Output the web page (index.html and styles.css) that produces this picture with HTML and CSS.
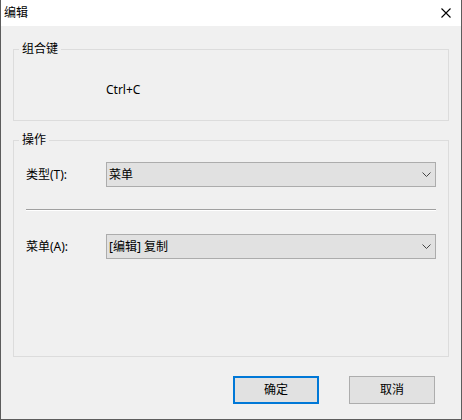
FILE: index.html
```html
<!DOCTYPE html>
<html lang="zh-CN">
<head>
<meta charset="utf-8">
<title>编辑</title>
<link rel="stylesheet" href="styles.css">
</head>
<body>
<div class="window">
  <div class="titlebar">
    <span class="title">编辑</span>
    <svg class="close" width="10" height="10" viewBox="0 0 10 10"><path d="M0.5 0.5L9.5 9.5M9.5 0.5L0.5 9.5" stroke="#000" stroke-width="1.1" fill="none"/></svg>
  </div>
  <div class="content">
    <div class="group group-keys">
      <div class="legend">组合键</div>
      <div class="keys">Ctrl+C</div>
    </div>
    <div class="group group-action">
      <div class="legend">操作</div>
      <div class="row row-type">
        <span class="label">类型(T):</span>
        <div class="select"><span>菜单</span><svg width="9" height="5" viewBox="0 0 9 5"><path d="M0.5 0.5L4.5 4.5L8.5 0.5" stroke="#444" stroke-width="1" fill="none"/></svg></div>
      </div>
      <div class="separator"></div>
      <div class="row row-menu">
        <span class="label">菜单(A):</span>
        <div class="select"><span>[编辑] 复制</span><svg width="9" height="5" viewBox="0 0 9 5"><path d="M0.5 0.5L4.5 4.5L8.5 0.5" stroke="#444" stroke-width="1" fill="none"/></svg></div>
      </div>
    </div>
    <div class="buttons">
      <div class="btn btn-default">确定</div>
      <div class="btn">取消</div>
    </div>
  </div>
</div>
</body>
</html>
```
FILE: styles.css
```css
html, body {
  margin: 0;
  padding: 0;
  background: #ffffff;
}
body {
  font-family: "Noto Sans", "Noto Sans CJK SC", sans-serif;
  font-size: 12px;
  color: #000;
}
.window {
  box-sizing: border-box;
  width: 462px;
  height: 420px;
  border: 1px solid #5c5c5c;
  border-top: none;
  display: flex;
  flex-direction: column;
}
.titlebar {
  height: 26px;
  flex: none;
  background: #fff;
  display: flex;
  align-items: center;
  justify-content: space-between;
  padding: 0 10px 0 3px;
}
.title {
  line-height: 16px;
  margin-top: -1px;
}
.close {
  display: block;
}
.content {
  flex: 1;
  background: #f0f0f0;
  padding: 0 12px;
  display: flex;
  flex-direction: column;
}
.group {
  box-sizing: border-box;
  border: 1px solid #dcdcdc;
  display: flex;
  flex-direction: column;
}
.legend {
  line-height: 14px;
  height: 14px;
  margin: -8px 0 0 5px;
  padding: 0 3px;
  background: #f0f0f0;
  align-self: flex-start;
}
.group-keys {
  margin-top: 23px;
  height: 72px;
}
.keys {
  margin-top: 26px;
  padding-left: 92px;
  line-height: 16px;
}
.group-action {
  margin-top: 19px;
  height: 217px;
  padding: 0 12px;
}
.group-action .legend {
  margin-left: -7px;
}
.row {
  display: flex;
  align-items: center;
}
.row-type {
  margin-top: 15px;
}
.row-menu {
  margin-top: 23px;
}
.label {
  width: 80px;
  flex: none;
  line-height: 16px;
}
.select {
  box-sizing: border-box;
  width: 330px;
  height: 25px;
  border: 1px solid #acacac;
  background: #e1e1e1;
  display: flex;
  align-items: center;
  justify-content: space-between;
  padding: 0 4px 0 2px;
  line-height: 16px;
}
.select svg {
  display: block;
}
.separator {
  margin-top: 22px;
  height: 1px;
  background: #a0a0a0;
  border-bottom: 1px solid #ffffff;
}
.buttons {
  margin-top: 19px;
  display: flex;
  justify-content: flex-end;
  gap: 30px;
  padding-right: 14px;
}
.btn {
  box-sizing: border-box;
  width: 86px;
  height: 28px;
  border: 1px solid #adadad;
  background: #e1e1e1;
  display: flex;
  align-items: center;
  justify-content: center;
  line-height: 16px;
}
.btn-default {
  border: 2px solid #0078d7;
}
```
